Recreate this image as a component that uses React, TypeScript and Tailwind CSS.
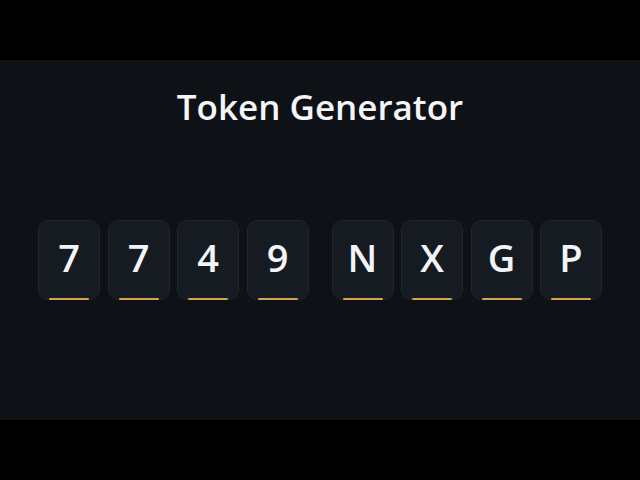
const groups = [
  ["7", "7", "4", "9"],
  ["N", "X", "G", "P"],
];

function TokenCell({ char }: { char: string }) {
  return (
    <div className="relative flex h-[80px] w-[62px] items-center justify-center rounded-[10px] border border-[#20252e] bg-[#161a21] pb-1.5">
      <span className="text-[38px] leading-none font-semibold text-[#f1f4f8]">{char}</span>
      <div className="absolute bottom-[-1px] left-[10px] right-[10px] h-[2px] rounded-full bg-[#d2a550]" />
    </div>
  );
}

export default function App() {
  return (
    <div
      className="flex h-screen w-full flex-col bg-black"
      style={{ fontFamily: '"Open Sans", "Noto Sans", sans-serif' }}
    >
      <div className="h-[60px] shrink-0 bg-black" />
      <main className="flex flex-1 flex-col items-center bg-[#0e1116] pt-[25px]">
        <h1 className="text-[35px] leading-[44px] font-semibold text-[#f3f5f8]">Token Generator</h1>
        <div className="mt-[91px] flex gap-[23px]">
          {groups.map((g, gi) => (
            <div key={gi} className="flex gap-[7.5px]">
              {g.map((c, i) => (
                <TokenCell key={i} char={c} />
              ))}
            </div>
          ))}
        </div>
      </main>
      <div className="h-[60px] shrink-0 bg-black" />
    </div>
  );
}
